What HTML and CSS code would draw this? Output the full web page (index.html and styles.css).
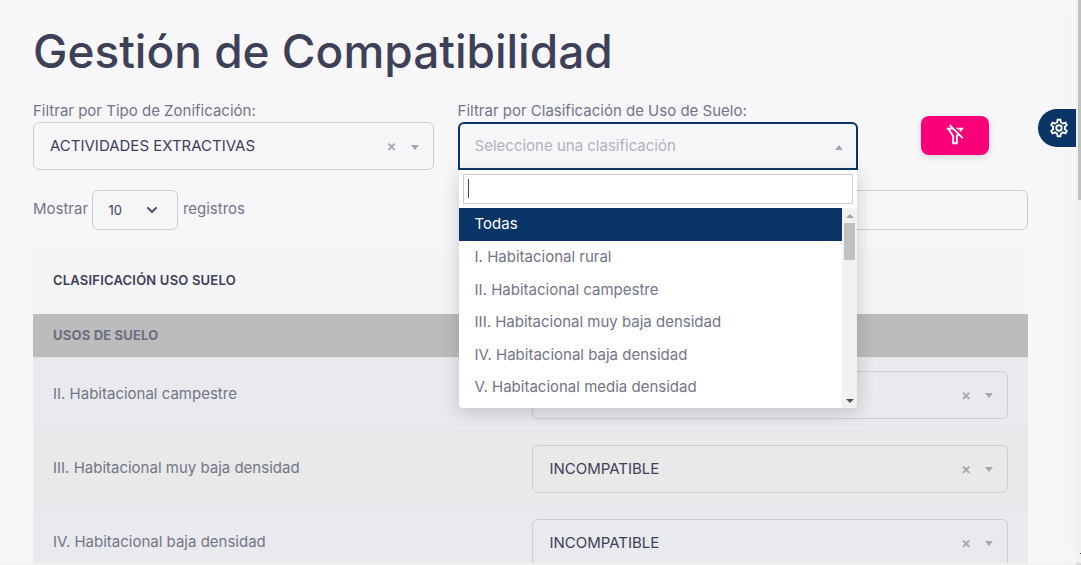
FILE: index.html
```html
<!DOCTYPE html>
<html lang="es">
<head>
    <meta charset="UTF-8">
    <meta name="viewport" content="width=device-width, initial-scale=1.0">
    <title>Gestión de Compatibilidad</title>
    <link rel="stylesheet" href="styles.css">
</head>
<body>
    <main class="content">
        <h1>Gestión de Compatibilidad</h1>

        <div class="filtros">
            <div class="filtro">
                <label>Filtrar por Tipo de Zonificación:</label>
                <div class="select2">
                    <span class="valor">ACTIVIDADES EXTRACTIVAS</span>
                    <span class="clear">×</span>
                    <span class="flecha"></span>
                </div>
            </div>
            <div class="filtro">
                <label>Filtrar por Clasificación de Uso de Suelo:</label>
                <div class="select2 abierto">
                    <span class="valor placeholder">Seleccione una clasificación</span>
                    <span class="flecha arriba"></span>
                </div>
                <div class="dropdown">
                    <div class="buscador"><span class="cursor"></span></div>
                    <div class="resultados">
                        <ul>
                            <li class="activo">Todas</li>
                            <li>I. Habitacional rural</li>
                            <li>II. Habitacional campestre</li>
                            <li>III. Habitacional muy baja densidad</li>
                            <li>IV. Habitacional baja densidad</li>
                            <li>V. Habitacional media densidad</li>
                        </ul>
                        <div class="scroll">
                            <span class="scroll-up"></span>
                            <span class="scroll-thumb"></span>
                            <span class="scroll-down"></span>
                        </div>
                    </div>
                </div>
            </div>
            <div class="acciones">
                <button class="btn-limpiar">
                    <svg width="22" height="22" viewBox="0 0 24 24" fill="currentColor"><path d="M6.929.515 21.071 14.657l-1.414 1.414-3.823-3.822L15 13.5V22H9v-8.5L4 6H3V4h4.585L5.515 1.929 6.929.515ZM9.585 6H6.404L11 12.894V20h2v-7.106l1.392-2.087L9.585 6ZM21 4v2h-1l-1.915 2.872-1.442-1.443L17.596 6h-2.383l-2-2H21Z"/></svg>
                </button>
            </div>
        </div>

        <div class="controles">
            <div class="mostrar">
                <span>Mostrar</span>
                <div class="cantidad">
                    <span>10</span>
                    <svg width="12" height="8" viewBox="0 0 12 8" fill="none" stroke="currentColor" stroke-width="1.8"><path d="M1.4 1.4 6 6l4.6-4.6"/></svg>
                </div>
                <span>registros</span>
            </div>
            <div class="buscar"></div>
        </div>

        <div class="tabla">
            <div class="cabecera">CLASIFICACIÓN USO SUELO</div>
            <div class="grupo">USOS DE SUELO</div>
            <div class="fila">
                <span class="nombre">II. Habitacional campestre</span>
                <div class="select2"><span class="valor"></span><span class="clear">×</span><span class="flecha"></span></div>
            </div>
            <div class="fila par">
                <span class="nombre">III. Habitacional muy baja densidad</span>
                <div class="select2"><span class="valor">INCOMPATIBLE</span><span class="clear">×</span><span class="flecha"></span></div>
            </div>
            <div class="fila">
                <span class="nombre">IV. Habitacional baja densidad</span>
                <div class="select2"><span class="valor">INCOMPATIBLE</span><span class="clear">×</span><span class="flecha"></span></div>
            </div>
        </div>
    </main>

    <!-- panel lateral cerrado, solo asoma el botón -->
    <aside class="customizer">
        <div class="btn-config">
            <svg width="22" height="22" viewBox="0 0 24 24" fill="currentColor"><path d="M12,8A4,4 0 0,1 16,12A4,4 0 0,1 12,16A4,4 0 0,1 8,12A4,4 0 0,1 12,8M12,10A2,2 0 0,0 10,12A2,2 0 0,0 12,14A2,2 0 0,0 14,12A2,2 0 0,0 12,10M10,22C9.75,22 9.54,21.82 9.5,21.58L9.13,18.93C8.5,18.68 7.96,18.34 7.44,17.94L4.95,18.95C4.73,19.03 4.46,18.95 4.34,18.73L2.34,15.27C2.21,15.05 2.27,14.78 2.46,14.63L4.57,12.97L4.5,12L4.57,11L2.46,9.37C2.27,9.22 2.21,8.95 2.34,8.73L4.34,5.27C4.46,5.05 4.73,4.96 4.95,5.05L7.44,6.05C7.96,5.66 8.5,5.32 9.13,5.07L9.5,2.42C9.54,2.18 9.75,2 10,2H14C14.25,2 14.46,2.18 14.5,2.42L14.87,5.07C15.5,5.32 16.04,5.66 16.56,6.05L19.05,5.05C19.27,4.96 19.54,5.05 19.66,5.27L21.66,8.73C21.79,8.95 21.73,9.22 21.54,9.37L19.43,11L19.5,12L19.43,13L21.54,14.63C21.73,14.78 21.79,15.05 21.66,15.27L19.66,18.73C19.54,18.95 19.27,19.04 19.05,18.95L16.56,17.95C16.04,18.34 15.5,18.68 14.87,18.93L14.5,21.58C14.46,21.82 14.25,22 14,22H10M11.25,4L10.88,6.61C9.68,6.86 8.62,7.5 7.85,8.39L5.44,7.35L4.69,8.65L6.8,10.2C6.4,11.37 6.4,12.64 6.8,13.8L4.68,15.36L5.43,16.66L7.86,15.62C8.63,16.5 9.68,17.14 10.87,17.38L11.24,20H12.76L13.13,17.39C14.32,17.14 15.37,16.5 16.14,15.62L18.57,16.66L19.32,15.36L17.2,13.81C17.6,12.64 17.6,11.37 17.2,10.2L19.31,8.65L18.56,7.35L16.15,8.39C15.38,7.5 14.32,6.86 13.12,6.62L12.75,4H11.25Z"/></svg>
        </div>
    </aside>
    <div class="barra-v"><span class="barra-thumb"></span><span class="barra-flecha"></span></div>
    <div class="barra-h"></div>
</body>
</html>
```
FILE: styles.css
```css
* {
    box-sizing: border-box;
}
body {
    position: relative;
    display: grid;
    grid-template-columns: 1fr 5px;
    grid-template-rows: 1fr 2px;
    height: 565px;
    margin: 0;
    overflow: hidden;
    font-family: Inter, "Liberation Sans", sans-serif;
    font-size: 15px;
    line-height: 22px;
    color: #737586;
    background: #f7f7f9;
}
.content {
    min-height: 0;
    padding: 20px 48px 0 33px;
    overflow: hidden;
}
h1 {
    margin: 0 0 17px;
    font-size: 46px;
    font-weight: 500;
    line-height: 63px;
    color: #3e4058;
}

/* filtros */
.filtros {
    display: grid;
    grid-template-columns: 5fr 5fr 2fr;
    margin-right: -24px;
}
.filtro {
    position: relative;
    margin-right: 24px;
}
.filtro label {
    display: block;
}
.select2 {
    display: flex;
    align-items: center;
    height: 48px;
    padding: 0 14px 0 16px;
    border: 1px solid #cdced4;
    border-radius: 6px;
}
.select2.abierto {
    padding: 0 13px 0 15px;
    border: 2px solid #0a3567;
    border-radius: 6px 6px 0 0;
}
.valor {
    flex: 1;
    color: #3e4058;
}
.placeholder {
    color: #b0b1bb;
}
.clear {
    margin-right: 14px;
    font-size: 15px;
    font-weight: 600;
    color: #a5a6b2;
}
.flecha {
    margin-top: 2px;
    border: 4px solid transparent;
    border-top: 5px solid #a5a6b2;
    border-bottom: 0;
}
.flecha.arriba {
    border-top: 0;
    border-bottom: 5px solid #a5a6b2;
}
.acciones {
    display: flex;
    justify-content: center;
    align-items: flex-start;
    margin-right: 24px;
    padding-top: 16px;
}
.btn-limpiar {
    display: flex;
    align-items: center;
    justify-content: center;
    width: 68px;
    height: 39px;
    padding: 0 1px 1px 0;
    color: #fff;
    background: #f90078;
    border: none;
    border-radius: 8px;
    box-shadow: 0 2px 6px rgba(46, 38, 61, 0.16);
}

/* lista desplegable */
.dropdown {
    position: absolute;
    z-index: 2;
    top: 70px;
    left: 1px;
    right: 1px;
    overflow: hidden;
    background: #fff;
    border-radius: 0 0 4px 4px;
    box-shadow: 0 4px 18px rgba(46, 38, 61, 0.22);
}
.buscador {
    height: 30px;
    margin: 4px;
    padding: 4px;
    border: 1px solid #cdced4;
}
.cursor {
    display: block;
    width: 1px;
    height: 19px;
    background: #3e4058;
}
.resultados {
    display: flex;
    height: 200px;
}
.resultados ul {
    flex: 1;
    margin: 0;
    padding: 0;
    list-style: none;
}
.resultados li {
    height: 32.6px;
    padding: 5.4px 16px 0;
}
.resultados .activo {
    color: #fff;
    background: #0a3567;
}
.scroll {
    display: flex;
    flex-direction: column;
    align-items: center;
    width: 15px;
    padding: 6px 0 5px;
    background: #f1f1f1;
}
.scroll-up {
    border: 4px solid transparent;
    border-top: 0;
    border-bottom: 4px solid #a3a3a3;
}
.scroll-thumb {
    width: 11px;
    height: 37px;
    margin: 5px 0 auto;
    background: #c1c1c1;
}
.scroll-down {
    border: 4px solid transparent;
    border-top: 4px solid #505050;
    border-bottom: 0;
}

/* controles de la tabla */
.controles {
    display: flex;
    justify-content: space-between;
    margin: 20px 0;
}
.mostrar {
    display: flex;
    gap: 4.4px;
    height: 40px;
    line-height: 38px;
}
.cantidad {
    display: flex;
    align-items: center;
    justify-content: space-between;
    width: 86px;
    height: 40px;
    padding: 0 19px 0 15px;
    font-size: 13px;
    color: #3e4058;
    border: 1px solid #cdced4;
    border-radius: 6px;
}
.buscar {
    width: 220px;
    height: 40px;
    border: 1px solid #cdced4;
    border-radius: 6px;
}

/* tabla */
.cabecera {
    height: 64px;
    padding: 19px 20px;
    font-size: 13px;
    font-weight: 600;
    letter-spacing: 0.2px;
    color: #3e4058;
    background: #f5f5f7;
}
.grupo {
    height: 43px;
    padding: 10px 20px;
    font-size: 13px;
    font-weight: 700;
    letter-spacing: 0.2px;
    color: #6b6d80;
    background: #bcbcbc;
}
.fila {
    display: grid;
    grid-template-columns: 479.4px 475.6px;
    align-items: center;
    height: 74px;
    padding: 0 20px;
    background: #e9eaee;
    border-top: 1px solid #e4e4e8;
}
.fila.par {
    background: #e9e9ea;
}
.nombre {
    padding-bottom: 2px;
}

/* panel lateral */
.customizer {
    position: absolute;
    top: 0;
    right: 0;
    width: 5px;
    height: 563px;
    box-shadow: 0 0 20px rgba(46, 38, 61, 0.06);
}
.btn-config {
    position: absolute;
    top: 109px;
    left: -38px;
    display: flex;
    align-items: center;
    justify-content: center;
    width: 38px;
    height: 38px;
    padding-left: 4px;
    color: #fff;
    background: #0a3567;
    border-radius: 19px 0 0 19px;
}

/* barras de desplazamiento */
.barra-v {
    position: relative;
    grid-column: 2;
    grid-row: 1;
    padding-left: 2px;
    background: #f1f1f1;
}
.barra-thumb {
    display: block;
    height: 200px;
    background: #c1c1c1;
}
.barra-flecha {
    position: absolute;
    right: 0;
    bottom: 9px;
    width: 1px;
    height: 1px;
    background: #505050;
}
.barra-h {
    grid-column: 1 / 3;
    background: linear-gradient(to right, #f1f1f1 1076px, #dcdcdc 1076px);
}
```
